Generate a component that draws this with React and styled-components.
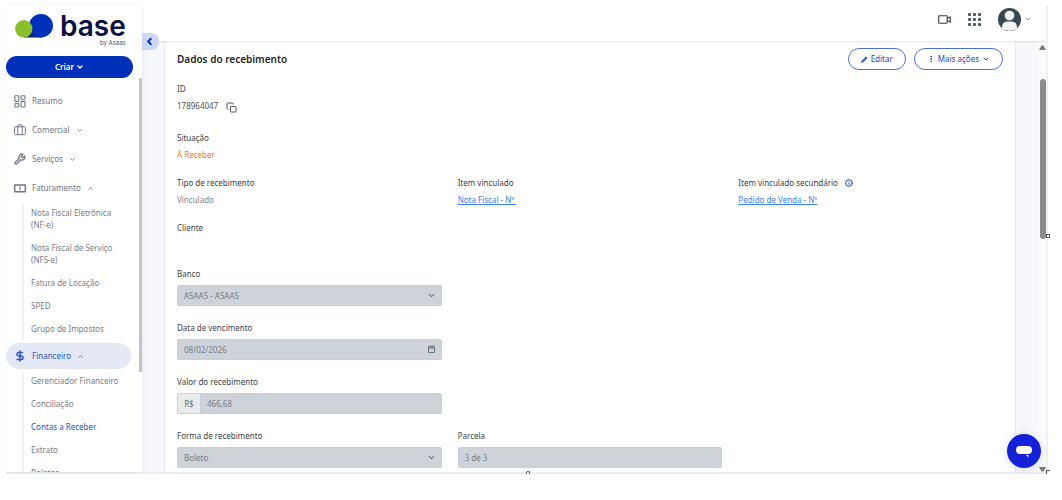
import React from 'react';
import styled, { createGlobalStyle, css } from 'styled-components';
import {
  ChevronDown,
  ChevronLeft,
  ChevronUp,
  DollarSign,
  EllipsisVertical,
  Info,
  Wrench,
} from 'lucide-react';

const GlobalStyle = createGlobalStyle`
  * {
    box-sizing: border-box;
  }

  body {
    margin: 0;
    background-color: #fff;
    font-family: "Noto Sans", "Open Sans", sans-serif;
    font-size: 8px;
    line-height: 12px;
    color: #3c4148;
  }

  button, input, select {
    font: inherit;
    margin: 0;
  }
`;

const Page = styled.div`
  height: 100vh;
  padding: 5px 14px 26px 6px;
`;

const Frame = styled.div`
  position: relative;
  display: flex;
  height: 100%;
  border-right: 2px solid #f0eff5;
  border-bottom: 2px solid #ebecf5;
`;

const Handle = styled.span`
  position: absolute;
  width: 4px;
  height: 4px;
  border: 1px solid #55585e;
  background-color: #fff;
`;

const BottomHandle = styled(Handle)`
  bottom: -2px;
  left: 50%;
  height: 3px;
  border-bottom: none;
  border-radius: 2px 2px 0 0;
`;

const SideHandle = styled(Handle)`
  top: 49%;
  right: -4px;
`;

const CornerHandle = styled(Handle)`
  right: -4px;
  bottom: -2px;
  border-width: 1px 0 0 1px;
`;

const Sidebar = styled.aside`
  position: relative;
  z-index: 2;
  flex: 0 0 136px;
  display: flex;
  flex-direction: column;
  background-color: #fff;
  box-shadow: 1px 0 3px rgba(30, 40, 70, 0.08);
  overflow: hidden;
`;

const Brand = styled.a`
  flex: none;
  display: flex;
  height: 51px;
  padding: 9px 0 0 9px;
  gap: 6px;
  color: #0a0f47;
  text-decoration: none;

  svg {
    flex: none;
  }
`;

const BrandText = styled.span`
  display: flex;
  flex-direction: column;
  align-items: flex-end;
  font-family: Inter, sans-serif;
`;

const BrandName = styled.span`
  font-size: 28px;
  font-weight: 600;
  line-height: 25px;
`;

const BrandBy = styled.span`
  font-size: 6px;
  line-height: 8px;
  color: #4b4f76;
`;

const CreateButton = styled.button`
  flex: none;
  display: flex;
  justify-content: center;
  align-items: center;
  gap: 2px;
  width: 127px;
  height: 22px;
  border: none;
  border-radius: 11px;
  background-color: #0030b9;
  color: #fff;
  font-weight: 600;
`;

const Nav = styled.nav`
  flex: 1;
  min-height: 0;
  display: flex;
  flex-direction: column;
  gap: 3px;
  padding: 10px 11px 0 0;
  overflow: hidden;

  > * {
    flex: none;
  }
`;

const itemStyle = css`
  display: flex;
  align-items: center;
  gap: 6px;
  width: 100%;
  height: 26px;
  padding: 0 0 0 8px;
  border: none;
  border-radius: 13px;
  background-color: ${({ $active }) => ($active ? '#e5e9f6' : 'transparent')};
  color: ${({ $active }) => ($active ? '#2f55cd' : '#6d7683')};
  text-decoration: none;

  svg {
    flex: none;
  }
`;

const NavLink = styled.a`
  ${itemStyle}
`;

const NavButton = styled.button`
  ${itemStyle}
`;

const IconSlot = styled.span`
  display: flex;
  width: 12px;
  justify-content: center;
`;

const SubMenu = styled.div`
  display: flex;
  flex-direction: column;
  gap: 11px;
  margin-left: 16px;
  padding: 3px 4px 5px 7px;
  border-left: 2px solid #eeeff2;
`;

const SubLink = styled.a`
  color: ${({ $active }) => ($active ? '#2350d2' : '#767e8a')};
  text-decoration: none;
`;

const SidebarThumb = styled.div`
  position: absolute;
  top: 73px;
  right: 0;
  width: 3px;
  height: 294px;
  background-color: #c4c4c4;
`;

const CollapseButton = styled.button`
  position: absolute;
  z-index: 3;
  top: 28px;
  left: 136px;
  display: flex;
  justify-content: center;
  align-items: center;
  width: 17px;
  height: 17px;
  padding: 0 3px 0 0;
  border: none;
  border-radius: 0 8px 8px 0;
  background-color: #ccd7f3;
  color: #0030b9;
`;

const Main = styled.main`
  flex: 1;
  min-width: 0;
  display: flex;
  flex-direction: column;
  overflow: hidden;
`;

const TopBar = styled.header`
  position: relative;
  z-index: 1;
  flex: none;
  display: flex;
  justify-content: flex-end;
  align-items: center;
  height: 36px;
  padding: 0 14px 8px 0;
  background-color: #fff;
  box-shadow: 0 1px 2px rgba(30, 40, 70, 0.12);
`;

const TopButton = styled.button`
  display: flex;
  align-items: center;
  gap: 3px;
  padding: 0;
  margin-left: 17px;
  border: none;
  background: none;
  color: #4e5a66;
`;

const Content = styled.div`
  flex: 1;
  min-height: 0;
  display: flex;
  background-color: #f7f8fb;
`;

const Card = styled.section`
  flex: 1;
  margin: 0 21px 0 22px;
  padding: 7px 12px 0;
  border: 1px solid #e6e8ed;
  border-width: 0 1px;
  border-radius: 5px 5px 0 0;
  background-color: #fff;
  overflow: hidden;
`;

const CardHead = styled.div`
  display: flex;
  align-items: center;
  gap: 8px;
  margin-bottom: 13px;
`;

const CardTitle = styled.h2`
  flex: 1;
  margin: 0;
  font-size: 10px;
  font-weight: 600;
  line-height: 14px;
  color: #212529;
`;

const OutlineButton = styled.button`
  display: flex;
  justify-content: center;
  align-items: center;
  gap: 3px;
  height: 22px;
  padding: 0 12px;
  border: 1px solid #4a6fdb;
  border-radius: 11px;
  background-color: #fff;
  color: #1c49c2;
`;

const Form = styled.form`
  display: flex;
  flex-direction: column;
  gap: 16px;
`;

const Row = styled.div`
  display: grid;
  grid-template-columns: repeat(3, 1fr);
  column-gap: 16px;
`;

const Field = styled.div`
  display: flex;
  flex-direction: column;
  gap: 5px;
`;

const Label = styled.label`
  display: flex;
  align-items: center;
  gap: 7px;
`;

const Value = styled.span`
  display: flex;
  gap: 8px;
  color: ${({ $color }) => $color || '#7f868f'};

  &:empty {
    min-height: 13px;
  }
`;

const CopyButton = styled.button`
  display: flex;
  align-items: flex-end;
  height: 16px;
  padding: 0 0 3px;
  border: none;
  background: none;
  color: #4d555f;
`;

const ItemLink = styled.a`
  align-self: flex-start;
  color: #3b82f6;
  text-decoration: underline;
  white-space: pre;
`;

const Control = styled.div`
  position: relative;
  display: flex;
  height: 21px;

  > svg {
    position: absolute;
    top: 6px;
    right: 6px;
    color: #6c747c;
    pointer-events: none;
  }
`;

const controlStyle = css`
  flex: 1;
  min-width: 0;
  padding: 0 6px;
  border: 1px solid #c8ced5;
  border-radius: 2px;
  background-color: #ced3da;
  color: #757d85;
  opacity: 1;
`;

const TextInput = styled.input`
  ${controlStyle}
  ${({ $joined }) => $joined && 'border-radius: 0 2px 2px 0;'}
`;

const Select = styled.select`
  ${controlStyle}
  appearance: none;
`;

const Prefix = styled.span`
  display: flex;
  justify-content: center;
  align-items: center;
  width: 23px;
  border: 1px solid #ced3da;
  border-right: none;
  border-radius: 2px 0 0 2px;
  background-color: #e9ecef;
  color: #656d75;
`;

const ScrollTrack = styled.div`
  display: flex;
  flex-direction: column;
  align-items: center;
  justify-content: space-between;
  width: 9px;
  padding: 4px 0 0 2px;
  background-color: #fafafa;
`;

const ScrollThumb = styled.div`
  width: 6px;
  height: 160px;
  margin: 29px 0 auto;
  border-radius: 3px;
  background-color: #8b8b8b;
`;

const ChatButton = styled.button`
  position: absolute;
  right: 5px;
  bottom: 4px;
  display: flex;
  justify-content: center;
  align-items: center;
  width: 34px;
  height: 34px;
  padding: 2px 0 0;
  border: none;
  border-radius: 50%;
  background-color: #1322d8;
  box-shadow: 0 1px 8px rgba(20, 40, 80, 0.16);
`;

const LogoMark = () => (
  <svg width="39" height="26" viewBox="0 0 39 26" aria-hidden="true">
    <path d="M9 23.500 H27 L30 16 L16 10 Z" fill="#07207f" />
    <ellipse cx="26" cy="11.800" rx="12" ry="11.700" fill="#0030b9" />
    <circle cx="8.800" cy="14.800" r="8.700" fill="#8cbf2c" />
  </svg>
);

const DashboardIcon = () => (
  <svg width="12" height="13" viewBox="0 0 12 13" fill="none" stroke="currentColor" strokeWidth="1.100">
    <rect x="0.8" y="0.8" width="4" height="5.6" rx="0.8" />
    <rect x="0.8" y="8.6" width="4" height="3.4" rx="0.8" />
    <rect x="7" y="0.8" width="4" height="3.4" rx="0.8" />
    <rect x="7" y="6.4" width="4" height="5.6" rx="0.8" />
  </svg>
);

const SuitcaseIcon = () => (
  <svg width="12" height="12" viewBox="0 0 12 12" fill="none" stroke="currentColor">
    <rect x="0.6" y="2.8" width="10.8" height="7.9" rx="1" />
    <path d="M3.8 10.7 V2 Q3.8 0.7 5 0.7 H7 Q8.2 0.7 8.2 2 V10.7" />
  </svg>
);

const MoneyIcon = () => (
  <svg width="12" height="9" viewBox="0 0 12 9" fill="none" stroke="currentColor">
    <rect x="0.7" y="1" width="10.6" height="6.8" rx="0.4" strokeWidth="1.4" />
    <path d="M6.9 3.2 Q5.2 2.6 5.2 3.6 Q5.2 4.3 6 4.5 Q6.9 4.7 6.8 5.4 Q6.6 6.2 5.1 5.8 M6 2.3 V6.7" strokeWidth="0.6" />
  </svg>
);

const PencilIcon = () => (
  <svg width="7" height="7" viewBox="0 0 7 7" fill="none" stroke="currentColor">
    <path d="M1.500 5.500 L5.700 1.300" strokeWidth="2.200" />
    <path d="M0.300 6.700 L0.900 5 L2 6.100 Z" strokeWidth="0.500" fill="currentColor" />
    <path d="M2 5 L4.800 2.200" stroke="#b9c7f0" strokeWidth="0.500" />
  </svg>
);

const CopyIcon = () => (
  <svg width="11" height="11" viewBox="0 0 11 11" fill="none" stroke="currentColor">
    <rect x="4.500" y="4.500" width="5.500" height="5.500" rx="0.600" />
    <path d="M2.500 7 H1.500 Q1 7 1 6.500 V1.500 Q1 1 1.500 1 H6.500 Q7 1 7 1.500 V2.500" />
  </svg>
);

const CalendarIcon = () => (
  <svg width="9" height="9" viewBox="0 0 9 9" fill="none" stroke="currentColor">
    <rect x="1.500" y="1.500" width="6" height="6" rx="0.500" />
    <path d="M1.500 3 H7.500" strokeWidth="1.200" />
    <path d="M3 0.300 V1.500 M6 0.300 V1.500" />
  </svg>
);

const VideoIcon = () => (
  <svg width="13" height="9" viewBox="0 0 13 9" fill="none" stroke="#333b44" strokeWidth="1.100">
    <rect x="0.700" y="0.800" width="8.500" height="7.400" rx="0.600" />
    <path d="M9.200 3.400 L12.200 1.800 V7.200 L9.200 5.600" />
  </svg>
);

const AppsIcon = () => (
  <svg width="13" height="13" viewBox="0 0 13 13" fill="currentColor">
    {[0, 5, 10].map((y) =>
      [0, 5, 10].map((x) => <rect key={`${x}-${y}`} x={x} y={y} width="3" height="3" rx="0.8" />)
    )}
  </svg>
);

const AvatarIcon = () => (
  <svg width="23" height="23" viewBox="0 0 23 23">
    <circle cx="11.5" cy="11.5" r="11.5" fill="#37474f" />
    <path d="M3.800 20.200 Q4 13.800 9 13.600 H14 Q19 13.800 19.200 20.200 Q16 23 11.500 23 Q7 23 3.800 20.200 Z" fill="#f3f4f5" />
    <circle cx="11.500" cy="7.500" r="5.200" fill="#f3f4f5" stroke="#37474f" strokeWidth="0.800" />
  </svg>
);

const ChatIcon = () => (
  <svg width="18" height="14" viewBox="0 0 18 14" fill="#fff">
    <rect x="1" y="1" width="16" height="8" rx="4" />
    <path d="M10.500 10 H13.500 V13 Q13 11 10.500 10 Z" />
  </svg>
);

const Arrow = ({ down }) => (
  <svg width="7" height="5" viewBox="0 0 7 5" fill="#7b7b7b">
    <path d={down ? 'M0 0 H7 L4.500 4.500 H2.500 Z' : 'M0 5 H7 L4.500 0.500 H2.500 Z'} />
  </svg>
);

const NavGroup = ({ icon, label, open, active }) => (
  <NavButton type="button" $active={active} aria-expanded={!!open}>
    <IconSlot>{icon}</IconSlot>
    {label}
    {open ? (
      <ChevronUp size={7} strokeWidth={3} color="#6d7683" />
    ) : (
      <ChevronDown size={7} strokeWidth={3} />
    )}
  </NavButton>
);

const SelectField = ({ id, label, value }) => (
  <Field>
    <Label htmlFor={id}>{label}</Label>
    <Control>
      <Select id={id} disabled>
        <option>{value}</option>
      </Select>
      <ChevronDown size={9} strokeWidth={3} />
    </Control>
  </Field>
);

const billingLinks = [
  'Nota Fiscal Eletrônica (NF-e)',
  'Nota Fiscal de Serviço (NFS-e)',
  'Fatura de Locação',
  'SPED',
  'Grupo de Impostos',
];

const financeLinks = [
  'Gerenciador Financeiro',
  'Conciliação',
  'Contas a Receber',
  'Extrato',
  'Boletos',
];

const App = () => (
  <>
    <GlobalStyle />
    <Page>
      <Frame>
        <Sidebar>
          <Brand href="#">
            <LogoMark />
            <BrandText>
              <BrandName>base</BrandName>
              <BrandBy>by Asaas</BrandBy>
            </BrandText>
          </Brand>
          <CreateButton type="button">
            Criar
            <ChevronDown size={8} strokeWidth={4} />
          </CreateButton>
          <Nav>
            <NavLink href="#">
              <IconSlot>
                <DashboardIcon />
              </IconSlot>
              Resumo
            </NavLink>
            <NavGroup icon={<SuitcaseIcon />} label="Comercial" />
            <NavGroup icon={<Wrench size={12} strokeWidth={2.5} />} label="Serviços" />
            <NavGroup icon={<MoneyIcon />} label="Faturamento" open />
            <SubMenu>
              {billingLinks.map((link) => (
                <SubLink key={link} href="#">{link}</SubLink>
              ))}
            </SubMenu>
            <NavGroup
              icon={<DollarSign size={12} strokeWidth={3} />}
              label="Financeiro"
              open
              active
            />
            <SubMenu>
              {financeLinks.map((link) => (
                <SubLink key={link} href="#" $active={link === 'Contas a Receber'}>{link}</SubLink>
              ))}
            </SubMenu>
          </Nav>
          <SidebarThumb />
        </Sidebar>
        <CollapseButton type="button" aria-label="Recolher menu">
          <ChevronLeft size={11} strokeWidth={4} />
        </CollapseButton>
        <Main>
          <TopBar>
            <TopButton type="button" aria-label="Vídeos"><VideoIcon /></TopButton>
            <TopButton type="button" aria-label="Aplicativos"><AppsIcon /></TopButton>
            <TopButton type="button" aria-label="Conta">
              <AvatarIcon />
              <ChevronDown size={8} strokeWidth={2} />
            </TopButton>
          </TopBar>
          <Content>
            <Card>
              <CardHead>
                <CardTitle>Dados do recebimento</CardTitle>
                <OutlineButton type="button">
                  <PencilIcon />
                  Editar
                </OutlineButton>
                <OutlineButton type="button">
                  <EllipsisVertical size={8} strokeWidth={3} />
                  Mais ações
                  <ChevronDown size={8} strokeWidth={3} />
                </OutlineButton>
              </CardHead>
              <Form>
                <Row>
                  <Field>
                    <Label as="span">ID</Label>
                    <Value $color="#4a5058">
                      178964047
                      <CopyButton type="button" aria-label="Copiar ID"><CopyIcon /></CopyButton>
                    </Value>
                  </Field>
                </Row>
                <Row>
                  <Field>
                    <Label as="span">Situação</Label>
                    <Value $color="#f47a20">À Receber</Value>
                  </Field>
                </Row>
                <Row>
                  <Field>
                    <Label as="span">Tipo de recebimento</Label>
                    <Value>Vinculado</Value>
                  </Field>
                  <Field>
                    <Label as="span">Item vinculado</Label>
                    <ItemLink href="#">{'Nota Fiscal - Nº '}</ItemLink>
                  </Field>
                  <Field>
                    <Label as="span">
                      Item vinculado secundário
                      <Info size={8} color="#1c49c2" strokeWidth={3} />
                    </Label>
                    <ItemLink href="#">Pedido de Venda - Nº</ItemLink>
                  </Field>
                </Row>
                <Row>
                  <Field>
                    <Label as="span">Cliente</Label>
                    <Value />
                  </Field>
                </Row>
                <Row>
                  <SelectField id="banco" label="Banco" value="ASAAS - ASAAS" />
                </Row>
                <Row>
                  <Field>
                    <Label htmlFor="vencimento">Data de vencimento</Label>
                    <Control>
                      <TextInput id="vencimento" defaultValue="08/02/2026" disabled />
                      <CalendarIcon />
                    </Control>
                  </Field>
                </Row>
                <Row>
                  <Field>
                    <Label htmlFor="valor">Valor do recebimento</Label>
                    <Control>
                      <Prefix>R$</Prefix>
                      <TextInput id="valor" defaultValue="466,68" $joined disabled />
                    </Control>
                  </Field>
                </Row>
                <Row>
                  <SelectField id="forma" label="Forma de recebimento" value="Boleto" />
                  <Field>
                    <Label htmlFor="parcela">Parcela</Label>
                    <Control>
                      <TextInput id="parcela" defaultValue="3 de 3" disabled />
                    </Control>
                  </Field>
                </Row>
              </Form>
            </Card>
            <ScrollTrack>
              <Arrow />
              <ScrollThumb />
              <Arrow down />
            </ScrollTrack>
          </Content>
        </Main>
        <ChatButton type="button" aria-label="Abrir chat">
          <ChatIcon />
        </ChatButton>
        <BottomHandle />
        <SideHandle />
        <CornerHandle />
      </Frame>
    </Page>
  </>
);

export default App;
